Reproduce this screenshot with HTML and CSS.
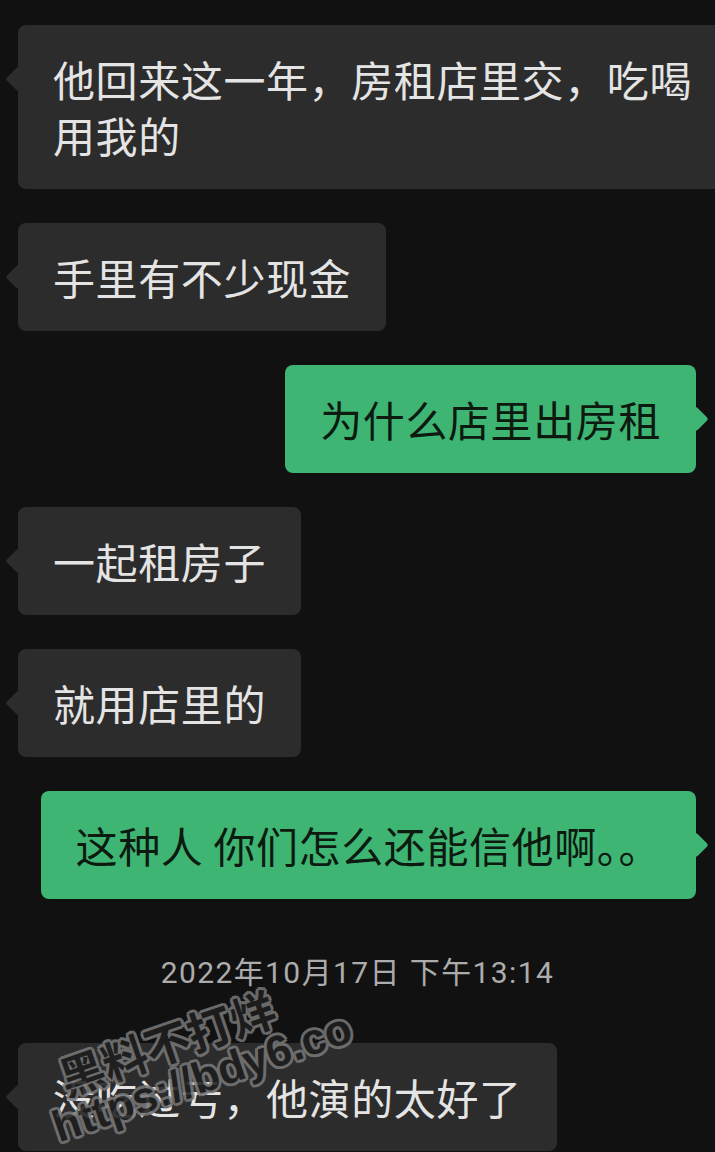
FILE: index.html
```html
<!DOCTYPE html>
<html lang="zh-CN">
<head>
<meta charset="utf-8">
<title>聊天记录</title>
<link rel="stylesheet" href="styles.css">
</head>
<body>
<div class="chat">
  <div class="bubble left">他回来这一年，房租店里交，吃喝用我的</div>
  <div class="bubble left">手里有不少现金</div>
  <div class="bubble right">为什么店里出房租</div>
  <div class="bubble left">一起租房子</div>
  <div class="bubble left">就用店里的</div>
  <div class="bubble right">这种人 你们怎么还能信他啊。。</div>
  <div class="time">2022年10月17日 下午13:14</div>
  <div class="bubble left">没吃过亏，他演的太好了</div>
</div>
<div class="watermark">
  <span class="wm-cn">黑料不打烊</span>
  <span class="wm-url">https://bdy6.co</span>
</div>
</body>
</html>
```
FILE: styles.css
```css
html, body {
  margin: 0;
  height: 1152px;
  overflow: hidden;
  background: #111111;
}
body {
  position: relative;
  font-family: "Noto Sans CJK SC", sans-serif;
}
.chat {
  display: flex;
  flex-direction: column;
  gap: 34px;
  padding-top: 25px;
}
.bubble {
  position: relative;
  box-sizing: border-box;
  width: max-content;
  font-size: 42px;
  line-height: 56px;
  letter-spacing: 0.6px;
  padding: 26px 35px 26px 35px;
  border-radius: 8px;
}
.bubble::before {
  content: "";
  position: absolute;
  top: 45px;
  width: 18px;
  height: 18px;
  background: inherit;
  border-radius: 3px;
  transform: rotate(45deg);
}
.left {
  align-self: flex-start;
  margin-left: 18px;
  max-width: 716px;
  background: #2c2c2c;
  color: #e4e4e4;
}
.left::before {
  left: -9px;
}
.right {
  align-self: flex-end;
  margin-right: 19px;
  background: #3fb574;
  color: #0c1a10;
}
.right::before {
  right: -9px;
}
.time {
  align-self: center;
  font-family: Roboto, "Noto Sans CJK SC", sans-serif;
  font-size: 30px;
  line-height: 40px;
  letter-spacing: 1.4px;
  color: #acacac;
  margin: 20px 0 16px;
}
.watermark {
  position: absolute;
  left: 32px;
  top: 1064px;
  transform-origin: 0 0;
  transform: rotate(-19deg);
  font-weight: 700;
  line-height: 45px;
  white-space: nowrap;
  color: #1e1e1e;
  opacity: 0.88;
  text-shadow:
    3px 0 #767676, -3px 0 #767676, 0 3px #767676, 0 -3px #767676,
    2.1px 2.1px #767676, -2.1px 2.1px #767676, 2.1px -2.1px #767676, -2.1px -2.1px #767676;
  pointer-events: none;
}
.wm-cn {
  display: block;
  margin-left: 22px;
  font-family: "Noto Sans CJK SC", sans-serif;
  font-size: 45px;
}
.wm-url {
  display: block;
  font-family: "Liberation Sans", sans-serif;
  font-size: 44px;
}
```
